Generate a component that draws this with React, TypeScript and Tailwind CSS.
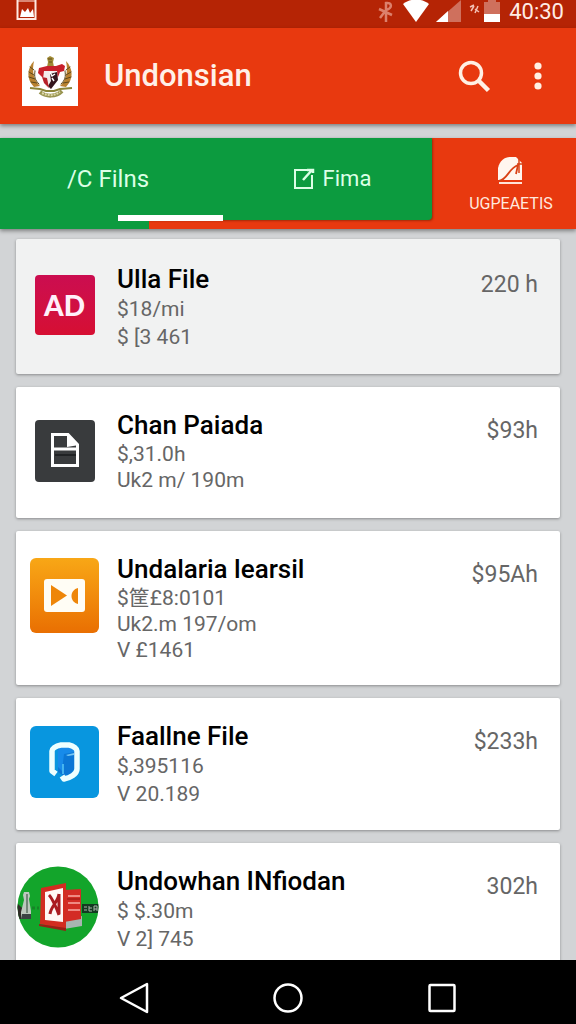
import type { ReactNode } from "react";

type Item = {
  title: string;
  lines: string[];
  price: string;
  icon: ReactNode;
  card: string;
  leading: string;
};

function Emblem() {
  return (
    <svg viewBox="0 0 56 59" className="h-[59px] w-14 bg-white" role="img" aria-label="Emblem">
      <g fill="#b98230">
        <path d="M12 14c-7 7-8 18 0 26l6-1c-7-6-8-16-6-25z" />
        <path d="M44 14c7 7 8 18 0 26l-6-1c7-6 8-16 6-25z" />
      </g>
      <g fill="none" stroke="#5e4a1c" strokeWidth="1" strokeLinecap="round">
        <path d="M8 20l4 3M7 25l5 3M7 30l6 2M9 35l6 1M13 24c-1 6 0 9 4 13" />
        <path d="M48 20l-4 3M49 25l-5 3M49 30l-6 2M47 35l-6 1M43 24c1 6 0 9-4 13" />
      </g>
      <path d="M25 11l3-2 4 2-1 4 1 5h-7l1-5z" fill="#a08a35" />
      <path d="M26 12h4M27 15h3" stroke="#5e4f1a" strokeWidth="1" />
      <path d="M17 21l8-2h9l6-2 3 2-1 5-4 1-2 5H20l-4-4z" fill="#c8202b" />
      <path d="M22 24h13l1 9-7 9-5-2-3-8z" fill="#f3ecec" />
      <path d="M28 27l7-2 1 8-7 9-3-3 3-5z" fill="#34151d" />
      <path d="M20 30l5 1 2 10-5-5z" fill="#b7202a" />
      <path d="M28 25l2 4 3-2M30 31l2 3" fill="none" stroke="#fff" strokeWidth="1.4" />
      <path d="M8 41l10 1 6 2h8l6-2 12-1" fill="none" stroke="#8b8437" strokeWidth="2" />
      <path d="M18 45c6 5 16 5 22-1" fill="none" stroke="#989450" strokeWidth="4" />
      <path d="M20 46c6 3 12 3 18-1" fill="none" stroke="#ddd8a8" strokeWidth="2" strokeDasharray="2 1" />
    </svg>
  );
}

function AdIcon() {
  return (
    <div className="flex size-15 items-center justify-center rounded bg-linear-to-b from-[#cb0d50] to-[#d60f32] font-['Lato',sans-serif] text-[28px] font-black text-[#fff0fa]">
      AD
    </div>
  );
}

function DocumentIcon() {
  return (
    <svg viewBox="0 0 60 62" className="h-[62px] w-15 rounded bg-[#393b3d]" aria-hidden="true">
      <path d="M17.5 14.5H33l9.500 10V45.500h-25z" fill="none" stroke="#fff" strokeWidth="3" />
      <path d="M32 13l12 12-12 2z" fill="#fff" />
      <path d="M18 29h25" stroke="#fff" strokeWidth="3" />
      <path d="M20 35h21" stroke="#202224" strokeWidth="2" />
    </svg>
  );
}

function VideoIcon() {
  return (
    <svg viewBox="0 0 69 75" className="h-[75px] w-[69px] rounded-md bg-linear-to-b from-[#f8a716] to-[#e96f02]" aria-hidden="true">
      <rect x="14" y="21" width="41" height="33" rx="3" fill="#fffdf5" />
      <path d="M21 27l16 10.500L21 48z" fill="#ee8609" />
      <path d="M48 30v16c-4-1-6.500-4-6.500-8s2.500-7 6.500-8z" fill="#ee8609" />
    </svg>
  );
}

function LoopIcon() {
  return (
    <svg viewBox="0 0 69 72" className="h-[72px] w-[69px] rounded-md bg-[#0896df]" aria-hidden="true">
      <path d="M28 23l3-2h11l3 3v18l-4 6-7 2-6-4z" fill="#0b77d5" />
      <path d="M34 28l11-2v-3l-3-2H30l-2 3v17l4 4z" fill="#178bea" />
      <path d="M36 29l8-2v2l-6 1z" fill="#76c8f4" />
      <path d="M33 38v10" fill="none" stroke="#58c9f7" strokeWidth="1.5" />
      <path d="M26 48l-4-3V25c0-2 3-5 9-6h8c5 1 8 4 8 6v18c0 5-7 9-13 10l-2-3" fill="none" stroke="#edffff" strokeWidth="5.500" strokeLinejoin="round" />
    </svg>
  );
}

function BookIcon() {
  return (
    <svg viewBox="0 0 82 82" className="mr-[14px] size-[82px] shrink-0" aria-hidden="true">
      <defs>
        <clipPath id="disc"><circle cx="41" cy="41" r="40.5" /></clipPath>
      </defs>
      <g clipPath="url(#disc)">
        <rect width="82" height="82" fill="#13a52b" />
        <path d="M0 42h22" stroke="#158526" strokeWidth="3" strokeDasharray="3 2" />
        <path d="M0 37l5 5 1 11H0z" fill="#302b27" />
        <path d="M7 26h5l1 4-1 3 2 12v8H4v-7l3-12-1-5z" fill="#bcc8bd" />
        <path d="M5 48h9v5H4z" fill="#3b4242" />
        <path d="M10 28v19" stroke="#5b6f60" strokeWidth="1.5" />
        <path d="M65 38h17v9H65z" fill="#143a21" />
        <path d="M67 41h3M67 44h3M72 40v5h3M72 42h3M77 45v-5h3v5M77 43h3" fill="none" stroke="#a9b5aa" strokeWidth="1" />
      </g>
      <path d="M47 54l18-4v10l-18 3z" fill="#a8b5b1" />
      <path d="M47 24l17-1v30l-17 3z" fill="#d32b25" />
      <path d="M51 30h12M51 37h12M51 44h12" stroke="#f9a9a2" strokeWidth="1.5" />
      <path d="M50 33h13" stroke="#931713" strokeWidth="1" />
      <path d="M24 22l25-5v46l-26-5z" fill="#d22c20" />
      <path d="M28 26l18-4v34l-18-2z" fill="#fff7f5" />
      <path d="M32 29c3 3 8 14 10 20M42 28c-1 8-8 12-9 20M42 28v20" fill="none" stroke="#aa1b21" strokeWidth="3" />
      <path d="M22 58l27 4v3l-27-5z" fill="#982015" />
    </svg>
  );
}

const items: Item[] = [
  { title: "Ulla File", lines: ["$18/mi", "$ [3 461"], price: "220 h", icon: <AdIcon />, card: "bg-[#f1f2f2] pt-6 pb-[23px]", leading: "leading-7" },
  { title: "Chan Paiada", lines: ["$,31.0h", "Uk2 m/ 190m"], price: "$93h", icon: <DocumentIcon />, card: "bg-white pt-[22px] pb-[25px]", leading: "leading-[26px]" },
  { title: "Undalaria learsil", lines: ["$筐£8:0101", "Uk2.m 197/om", "V £1461"], price: "$95Ah", icon: <VideoIcon />, card: "bg-white py-[22px]", leading: "leading-[26px]" },
  { title: "Faallne File", lines: ["$,395116", "V 20.189"], price: "$233h", icon: <LoopIcon />, card: "bg-white py-[22px]", leading: "leading-7" },
  { title: "Undowhan INfiodan", lines: ["$ $.30m", "V 2] 745"], price: "302h", icon: <BookIcon />, card: "bg-white py-[22px]", leading: "leading-7" },
];

function Card({ item }: { item: Item }) {
  return (
    <li className={`flex shrink-0 rounded-xs pr-[22px] shadow-[0_1px_3px_rgba(0,0,0,0.35)] ${item.card}`}>
      <div className="mr-1 flex h-[84px] w-[97px] shrink-0 items-center justify-center">
        {item.icon}
      </div>
      <div className="min-w-0 flex-1 whitespace-nowrap">
        <h2 className="text-[26px] leading-8 font-medium text-black">{item.title}</h2>
        {item.lines.map((line) => (
          <p key={line} className={`text-[21px] text-[#666] ${item.leading}`}>{line}</p>
        ))}
      </div>
      <p className="pt-1 text-[23px] leading-9 text-[#666]">{item.price}</p>
    </li>
  );
}

function StatusBar() {
  return (
    <div className="flex h-7 shrink-0 items-start justify-between bg-[#b52405] pr-3 pl-4 text-white">
      <svg viewBox="0 0 22 21" className="h-[21px] w-[22px]" aria-hidden="true">
        <path d="M1.500 0v19h18V0" fill="none" stroke="#ffe9e2" strokeWidth="2" />
        <path d="M1 1h19" stroke="#ffe9e2" strokeWidth="1" />
        <path d="M4 17l2-8 3 3 3-4 2 5 3-4 1 8z" fill="#fff" />
      </svg>
      <div className="flex items-start">
        <svg viewBox="0 0 124 24" className="h-6 w-[124px]" aria-hidden="true">
          <path d="M2 9l13 6M9 22V3c6-1 7 5 0 7L3 18" fill="none" stroke="#dc806c" strokeWidth="2.500" />
          <path d="M26 4C34-2 44-2 52 4L39 22z" fill="#fff" />
          <path d="M84 0v22H59z" fill="#cf705d" />
          <path d="M71 11v11H59z" fill="#fff" />
          <path d="M93 7l4-2M94 11l3-5M98 13l3-7M98 9l4 3" stroke="#f3c1b5" strokeWidth="1.500" />
          <path d="M107 2h4V0h8v2h4v20h-16z" fill="#cf705d" />
          <path d="M107 14h16v8h-16z" fill="#fff" />
        </svg>
        <span className="pl-2 text-[22px] leading-6 text-[#ffece5]">40:30</span>
      </div>
    </div>
  );
}

export default function App() {
  return (
    <div className="flex h-screen flex-col overflow-hidden bg-[#d2d4d6] font-['Roboto','Noto_Sans_CJK_SC',sans-serif]">
      <StatusBar />
      <header className="flex h-24 shrink-0 items-center bg-[#e8390f] px-[22px] shadow-[0_2px_4px_rgba(0,0,0,0.4)]">
        <Emblem />
        <h1 className="flex-1 pl-[26px] text-[31px] leading-10 font-medium text-[#fff0e8]">Undonsian</h1>
        <button type="button" aria-label="Search" className="mr-[41px]">
          <svg viewBox="0 0 34 34" className="size-[34px]" fill="none" stroke="#fff0e4" aria-hidden="true">
            <circle cx="13" cy="14" r="10.500" strokeWidth="3.500" />
            <path d="M20.500 21.500l10 10" strokeWidth="4.500" />
          </svg>
        </button>
        <button type="button" aria-label="More options" className="mr-[11px]">
          <svg viewBox="0 0 10 28" className="h-7 w-[10px]" fill="#fff0e4" aria-hidden="true">
            <circle cx="5" cy="4" r="3.600" /><circle cx="5" cy="14" r="3.600" /><circle cx="5" cy="24" r="3.600" />
          </svg>
        </button>
      </header>

      <nav className="mt-[14px] flex h-[91px] shrink-0 bg-[#e8390f] shadow-[0_2px_4px_rgba(0,0,0,0.4)]">
        <div className="relative flex w-[434px] max-w-3/4 grow flex-col">
          <div className="grid flex-1 grid-cols-2 rounded-br-sm bg-[#0c9b3f] text-2xl text-[#dcffe6] shadow-[1px_1px_2px_rgba(90,30,0,0.5)]">
            <button type="button">/C Filns</button>
            <button type="button" className="flex items-center justify-center gap-2 pl-4">
              <svg viewBox="0 0 22 22" className="size-[22px]" fill="none" stroke="currentColor" aria-hidden="true">
                <path d="M17 2H2v18h17V7" strokeWidth="2" />
                <path d="M10 12l9-10M14 2h6v3" strokeWidth="2.500" />
              </svg>
              <span className="text-[22px]">Fima</span>
            </button>
          </div>
          <div className="h-[9px] w-[149px] bg-[#0c9b3f]" />
          <div className="absolute bottom-2 left-[118px] h-[6px] w-[105px] bg-white" />
        </div>
        <button type="button" className="flex flex-1 flex-col items-center pt-[18px] pl-[14px] text-[#ffe9df]">
          <svg viewBox="0 0 28 29" className="h-[29px] w-7" aria-hidden="true">
            <path d="M1 24V12C3 4 8 1 14 1h5l6 6v17z" fill="#fff6ef" />
            <path d="M2 25c9-2 9-12 19-16l-2 9" fill="none" stroke="#d94115" strokeWidth="1.800" />
            <path d="M22 0v17M20 8h7" stroke="#d94115" strokeWidth="1.500" />
            <path d="M2 27h23" stroke="#ffe3d8" strokeWidth="2" />
          </svg>
          <span className="pt-[7px] text-base leading-6">UGPEAETIS</span>
        </button>
      </nav>

      <main className="min-h-0 flex-1 overflow-hidden px-4 pt-[10px]">
        <ul className="flex flex-col gap-[13px]">
          {items.map((item) => <Card key={item.title} item={item} />)}
        </ul>
      </main>

      <footer className="flex h-16 shrink-0 items-center justify-center gap-[122px] bg-black pt-3">
        <button type="button" aria-label="Back">
          <svg viewBox="0 0 32 32" className="size-8" fill="none" stroke="#fff" strokeWidth="2.500" strokeLinejoin="round" aria-hidden="true"><path d="M29 2v28L3 16z" /></svg>
        </button>
        <button type="button" aria-label="Home">
          <svg viewBox="0 0 32 32" className="size-8" fill="none" stroke="#fff" strokeWidth="2.500" aria-hidden="true"><circle cx="16" cy="16" r="13.500" /></svg>
        </button>
        <button type="button" aria-label="Recent apps">
          <svg viewBox="0 0 32 32" className="size-8" fill="none" stroke="#fff" strokeWidth="2.500" aria-hidden="true"><rect x="3.500" y="3" width="25" height="26" rx="1" /></svg>
        </button>
      </footer>
    </div>
  );
}
